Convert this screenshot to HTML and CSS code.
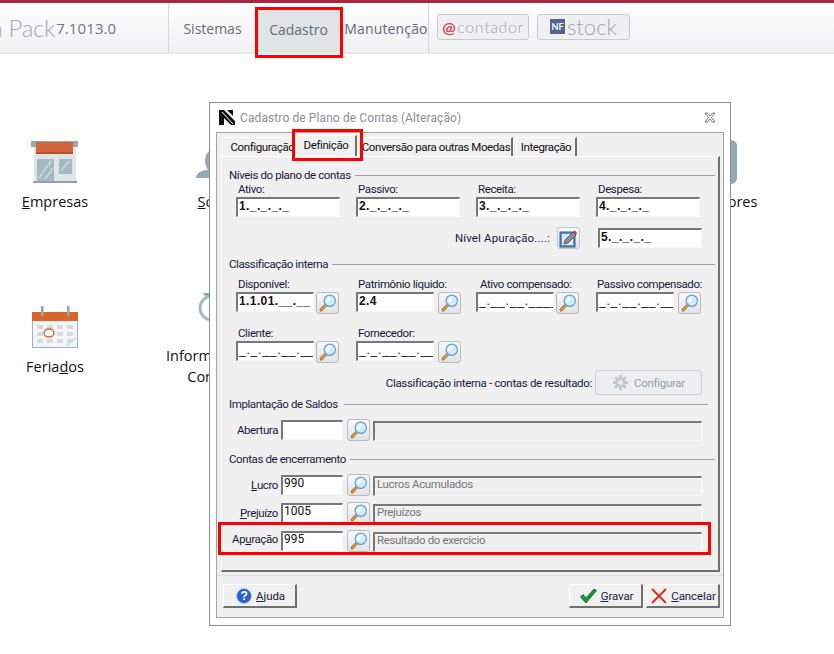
FILE: index.html
```html
<!DOCTYPE html>
<html lang="pt-BR">
<head>
<meta charset="utf-8">
<title>Cadastro de Plano de Contas</title>
<link rel="stylesheet" href="styles.css">
</head>
<body>
<svg class="defs" aria-hidden="true">
  <symbol id="lupa" viewBox="0 0 23 22">
    <path d="M4.5 18.5 L9.5 13.5" stroke="#8c5a20" stroke-width="3.2" stroke-linecap="round"/>
    <path d="M4.5 18.5 L9.5 13.5" stroke="#ee9a3a" stroke-width="2" stroke-linecap="round"/>
    <circle cx="14" cy="8.5" r="6.2" fill="#cfeafa" stroke="#6a9fcc" stroke-width="1.4"/>
    <path d="M10.2 9.5 A4.2 4.2 0 0 1 15.5 4.6 L 12 10.5 Z" fill="#fff"/>
  </symbol>
</svg>
<div class="screen">
  <header class="toolbar">
    <div class="brand"><span class="brand-name">a Pack</span><span class="brand-ver">7.1013.0</span></div>
    <nav class="nav">
      <span class="nav-item nav-sistemas">Sistemas</span>
      <span class="nav-item nav-active">Cadastro</span>
      <span class="nav-item nav-manut">Manutenção</span>
    </nav>
    <div class="tools">
      <span class="tool tool-contador"><span class="at">@</span>contador</span>
      <span class="tool tool-stock"><span class="nf">NF</span>stock</span>
    </div>
  </header>

  <main class="tiles">
    <div class="tile">
      <div class="tile-icon">
        <svg width="48" height="42" viewBox="0 0 48 42">
          <rect x="3" y="4" width="42" height="37" fill="#dfe5e7"/>
          <rect x="0" y="0" width="47" height="6" fill="#97aab3"/>
          <rect x="5" y="1" width="37" height="12" fill="#d2653a"/>
          <rect x="5" y="11" width="37" height="2" fill="#b3532e"/>
          <rect x="6" y="18" width="17" height="23" fill="#a5b9c1"/>
          <path d="M8 37 L20 20 M14 38 L22 27" stroke="#c6d4da" stroke-width="2"/>
          <rect x="28" y="18" width="13" height="15" fill="#a5b9c1"/>
          <path d="M30 30 L38 20" stroke="#c6d4da" stroke-width="2"/>
          <rect x="2" y="40" width="44" height="2" fill="#8fa2ab"/>
        </svg>
      </div>
      <div class="tile-label"><span><u>E</u>mpresas</span></div>
    </div>
    <div class="tile">
      <div class="tile-icon">
        <svg width="48" height="44" viewBox="0 0 48 44" fill="#95a7af">
          <circle cx="24" cy="21" r="14"/>
          <path d="M1 38 C1 32 8 29 24 29 C40 29 47 32 47 38 Z"/>
        </svg>
      </div>
      <div class="tile-label"><span><u>S</u>ócios</span></div>
    </div>
    <div class="tile"></div>
    <div class="tile"></div>
    <div class="tile">
      <div class="tile-icon">
        <svg width="52" height="44" viewBox="0 0 52 44"><rect x="0" y="0" width="52" height="44" rx="6" fill="#95a7af"/></svg>
      </div>
      <div class="tile-label"><span>Fornecedores</span></div>
    </div>
    <div class="tile">
      <div class="tile-icon">
        <svg width="48" height="44" viewBox="0 0 48 44">
          <rect x="1.5" y="7.5" width="45" height="35" fill="#f3f6f7" stroke="#9fb0b8"/>
          <rect x="1" y="7" width="46" height="9" fill="#d8672f"/>
          <rect x="10" y="1" width="2.5" height="10" fill="#94a7b0"/>
          <rect x="36" y="1" width="2.5" height="10" fill="#94a7b0"/>
          <g fill="#d5dde1">
            <rect x="6" y="20" width="6" height="4"/><rect x="16" y="20" width="6" height="4"/><rect x="26" y="20" width="6" height="4"/><rect x="36" y="20" width="6" height="4"/>
            <rect x="6" y="27" width="6" height="4"/><rect x="26" y="27" width="6" height="4"/><rect x="36" y="27" width="6" height="4"/>
            <rect x="6" y="34" width="6" height="4"/><rect x="16" y="34" width="6" height="4"/><rect x="26" y="34" width="6" height="4"/>
          </g>
          <ellipse cx="18" cy="28" rx="5" ry="4" fill="none" stroke="#d8672f" stroke-width="1.4"/>
          <path d="M36 42 L36 34 L46 33 Z" fill="#d5dde1"/>
        </svg>
      </div>
      <div class="tile-label"><span>Feria<u>d</u>os</span></div>
    </div>
    <div class="tile">
      <div class="tile-icon">
        <svg class="icon-over" width="48" height="44" viewBox="0 0 48 44">
          <path d="M8 -12 C10 -8 14 -6 22 -5 V-12 Z" fill="#95a7af"/>
          <circle cx="17" cy="3" r="12" fill="none" stroke="#a9b9c0" stroke-width="3"/>
        </svg>
      </div>
      <div class="tile-label"><span>Informações do<br>Contador</span></div>
    </div>
  </main>

  <section class="dialog">
    <div class="titlebar">
      <svg class="title-logo" width="17" height="17" viewBox="0 0 17 17">
        <path d="M0 1 H5 L16 12 V16 H12 L5 9 V16 H0 Z" fill="#111"/>
        <path d="M8 1 H14 V7 Z" fill="#111"/>
        <path d="M3 3 L14 15" stroke="#fff" stroke-width="1"/>
      </svg>
      <span class="title-text">Cadastro de Plano de Contas (Alteração)</span>
      <svg class="title-close" width="12" height="11" viewBox="0 0 12 11">
        <path d="M1 1 L3.5 1 L6 4 L8.5 1 L11 1 L7.5 5.5 L11 10 L8.5 10 L6 7 L3.5 10 L1 10 L4.5 5.5 Z" fill="#fff" stroke="#666" stroke-width="0.9"/>
      </svg>
    </div>
    <div class="panel">
      <div class="tabs">
        <span class="tab tab-conf">Configuração</span>
        <span class="tab tab-def">Definição</span>
        <span class="tab tab-conv">Conversão para outras Moedas</span>
        <span class="tab tab-int">Integração</span>
      </div>
      <div class="page">
        <div class="group-head"><span>Níveis do plano de contas</span></div>
        <div class="cols">
          <div class="field"><label>Ativo:</label><div class="input mask">1._._._._</div></div>
          <div class="field"><label>Passivo:</label><div class="input mask">2._._._._</div></div>
          <div class="field"><label>Receita:</label><div class="input mask">3._._._._</div></div>
          <div class="field"><label>Despesa:</label><div class="input mask">4._._._._</div></div>
        </div>
        <div class="level-row">
          <span>Nível Apuração....:</span>
          <button class="icon-btn edit-btn" type="button">
            <svg width="19" height="19" viewBox="0 0 19 19">
              <rect x="1" y="3" width="15" height="15" fill="#5e8fc0" stroke="#2f5f90"/>
              <rect x="3" y="5" width="11" height="11" fill="#dcebf7"/>
              <path d="M5 15 L6 11 L14 3 L17 6 L9 14 Z" fill="#8a8f96" stroke="#3a3a3a" stroke-width="0.7"/>
              <path d="M14 3 L15.5 1.5 L18 4 L17 6 Z" fill="#d83030"/>
            </svg>
          </button>
          <div class="input mask level-input">5._._._._</div>
        </div>

        <div class="group-head head-class"><span>Classificação interna</span></div>
        <div class="cols cols-class">
          <div class="field"><label>Disponível:</label><div class="lookup"><div class="input short mask">1.1.01.__.__</div><button class="icon-btn" type="button"><svg class="lupa"><use href="#lupa"/></svg></button></div></div>
          <div class="field"><label>Patrimônio líquido:</label><div class="lookup wide"><div class="input short mask">2.4</div><button class="icon-btn" type="button"><svg class="lupa"><use href="#lupa"/></svg></button></div></div>
          <div class="field"><label class="lab-ativo">Ativo compensado:</label><div class="lookup"><div class="input short plain-mask">_.__.__.____</div><button class="icon-btn" type="button"><svg class="lupa"><use href="#lupa"/></svg></button></div></div>
          <div class="field"><label class="lab-passivo">Passivo compensado:</label><div class="lookup wide"><div class="input short plain-mask">_._.__.__.__</div><button class="icon-btn" type="button"><svg class="lupa"><use href="#lupa"/></svg></button></div></div>
        </div>
        <div class="cols cols-second">
          <div class="field"><label>Cliente:</label><div class="lookup"><div class="input short plain-mask">_._.__.__.__</div><button class="icon-btn" type="button"><svg class="lupa"><use href="#lupa"/></svg></button></div></div>
          <div class="field"><label>Fornecedor:</label><div class="lookup wide"><div class="input short plain-mask">_._.__.__.__</div><button class="icon-btn" type="button"><svg class="lupa"><use href="#lupa"/></svg></button></div></div>
        </div>
        <div class="config-row">
          <span>Classificação interna - contas de resultado:</span>
          <button class="config-btn" type="button" disabled>
            <svg width="17" height="17" viewBox="0 0 17 17">
              <g stroke="#c4c8cb" stroke-width="3">
                <path d="M8.5 1 V16 M1 8.5 H16 M3.2 3.2 L13.8 13.8 M13.8 3.2 L3.2 13.8"/>
              </g>
              <circle cx="8.5" cy="8.5" r="5" fill="#c4c8cb"/>
              <circle cx="8.5" cy="8.5" r="2.4" fill="#eceef0"/>
            </svg>
            Configurar
          </button>
        </div>

        <div class="group-head head-saldos"><span>Implantação de Saldos</span></div>
        <div class="line-row">
          <label class="line-label">Abertura</label>
          <div class="input line-input"></div>
          <button class="icon-btn" type="button"><svg class="lupa"><use href="#lupa"/></svg></button>
          <div class="input readonly"></div>
        </div>

        <div class="group-head head-enc"><span>Contas de encerramento</span></div>
        <div class="line-row">
          <label class="line-label"><u>L</u>ucro</label>
          <div class="input line-input">990</div>
          <button class="icon-btn" type="button"><svg class="lupa"><use href="#lupa"/></svg></button>
          <div class="input readonly">Lucros Acumulados</div>
        </div>
        <div class="line-row next">
          <label class="line-label"><u>P</u>rejuízo</label>
          <div class="input line-input">1005</div>
          <button class="icon-btn" type="button"><svg class="lupa"><use href="#lupa"/></svg></button>
          <div class="input readonly">Prejuízos</div>
        </div>
        <div class="line-row next">
          <label class="line-label lab-up">Ap<u>u</u>ração</label>
          <div class="input line-input">995</div>
          <button class="icon-btn" type="button"><svg class="lupa"><use href="#lupa"/></svg></button>
          <div class="input readonly">Resultado do exercício</div>
        </div>
      </div>
      <footer class="footer">
        <button class="win-btn" type="button">
          <svg width="16" height="16" viewBox="0 0 16 16">
            <circle cx="8" cy="8" r="7.5" fill="#2a62c8" stroke="#b8c8e0"/>
            <text x="8" y="12" text-anchor="middle" class="help-q">?</text>
          </svg>
          <span><u>A</u>juda</span>
        </button>
        <div class="footer-right">
          <button class="win-btn" type="button">
            <svg width="17" height="16" viewBox="0 0 17 16">
              <path d="M0.5 9 L3 6.5 L6 10 L14 1 L16.5 2.5 L6 15 Z" fill="#15a01f" stroke="#0a3a60" stroke-width="0.7"/>
            </svg>
            <span><u>G</u>ravar</span>
          </button>
          <button class="win-btn" type="button">
            <svg width="16" height="16" viewBox="0 0 16 16">
              <path d="M1 1 L15 15 M15 1 L1 15" stroke="#e02a10" stroke-width="1.8"/>
            </svg>
            <span><u>C</u>ancelar</span>
          </button>
        </div>
      </footer>
    </div>
  </section>

  <div class="hl hl-nav"></div>
  <div class="hl hl-tab"></div>
  <div class="hl hl-row"></div>
</div>
</body>
</html>
```

FILE: styles.css
```css
* { box-sizing: border-box; }
html, body { margin: 0; padding: 0; background: #fff; }
.defs { width: 0; height: 0; position: absolute; }
.screen { position: relative; width: 834px; height: 654px; overflow: hidden; font-family: "Open Sans", sans-serif; }

/* Top toolbar */
.toolbar { display: flex; height: 54px; border-top: 3px solid #a8263f; border-bottom: 2px solid #e6e8ea; background: linear-gradient(#ffffff, #eef0f1); color: #666d75; }
.brand { flex: none; display: flex; align-items: center; border-right: 1px solid #d4d6d8; margin-left: -9px; width: 178px; }
.brand-name { font-family: Lato, sans-serif; font-weight: 300; font-size: 24px; color: #a4a8ac; letter-spacing: -0.3px; }
.brand-ver { font-size: 15px; color: #70767c; margin-left: 1px; letter-spacing: 0.1px; }
.nav { display: flex; width: 260px; border-right: 1px solid #d4d6d8; font-size: 14px; }
.nav-item { display: flex; align-items: center; justify-content: center; padding-top: 1px; }
.nav-sistemas { width: 87px; }
.nav-active { width: 85px; background: #e1e4e7; margin-top: 6px; padding-bottom: 3px; }
.nav-manut { width: 87px; color: #5f6a78; letter-spacing: 0.15px; padding-left: 3px; }
.tools { display: flex; align-items: center; gap: 8px; margin-left: 8px; padding-bottom: 2px; }
.tool { display: flex; align-items: center; justify-content: center; width: 92px; height: 26px; border: 1px solid #c8cacc; border-radius: 3px; background: #eef0f1; color: #a2a6aa; }
.tool-contador { font-family: Lato, sans-serif; font-weight: 300; font-size: 16px; letter-spacing: 0.6px; }
.at { color: #cf4a55; font-weight: 700; font-size: 16px; margin-right: 1px; }
.tool-stock { width: 93px; font-family: Lato, sans-serif; font-weight: 300; font-size: 22px; }
.nf { background: #56648e; color: #fff; font-size: 9px; font-weight: 700; width: 15px; height: 15px; line-height: 15px; text-align: center; margin-right: 2px; letter-spacing: 0; }

/* Desktop tiles */
.tiles { display: grid; grid-template-columns: repeat(5, 164px); grid-auto-rows: 165px; margin-left: -27px; margin-top: 86px; }
.tile { display: flex; flex-direction: column; align-items: center; font-size: 14.5px; color: #111; }
.tile-icon { height: 44px; display: flex; align-items: center; justify-content: center; }
.icon-over { overflow: visible; }
.tile-label { height: 34px; display: flex; align-items: center; text-align: center; line-height: 21px; white-space: nowrap; }

/* Dialog window */
.dialog { position: absolute; left: 209px; top: 102px; width: 522px; height: 524px; background: #fff; border: 1px solid #8a8f94; font-family: Roboto, sans-serif; font-size: 11.5px; letter-spacing: -0.4px; color: #1a1a3a; padding: 0 6px 7px; display: flex; flex-direction: column; }
.titlebar { height: 29px; flex: none; display: flex; align-items: center; }
.title-logo { margin-left: 3px; }
.title-text { margin-left: 4px; color: #8b9096; flex: 1; font-size: 12px; letter-spacing: 0.1px; }
.title-close { margin-right: 8px; }
.panel { flex: 1; background: #f0f0f0; border: 1px solid #a2a4a6; display: flex; flex-direction: column; }

.tabs { display: flex; height: 23px; padding-left: 5px; align-items: flex-end; color: #111; flex: none; white-space: nowrap; }
.tab { height: 19px; display: flex; align-items: center; justify-content: center; border-top: 1px solid #fff; border-left: 1px solid #fff; border-right: 2px solid #707070; }
.tab-conf { width: 74px; border-right: 0; padding-left: 6px; }
.tab-def { width: 61px; height: 21px; padding-bottom: 3px; }
.tab-conv { width: 153px; margin-left: 3px; }
.tab-int { width: 61px; margin-left: 3px; }

.page { height: 416px; margin-left: 4px; margin-right: 3px; border-top: 1px solid #fff; border-left: 1px solid #fff; border-right: 2px solid #707070; border-bottom: 2px solid #707070; padding: 11px 3px 0 7px; flex: none; }

.group-head { display: flex; align-items: center; gap: 4px; height: 14px; color: #1a1a3a; }
.group-head::after { content: ""; flex: 1; height: 1px; background: #a0a0a0; margin-top: 1px; }
.head-class { margin-top: 8px; }
.head-saldos { margin-top: 2px; margin-right: 7px; }
.head-saldos::after { margin-left: 2px; }
.head-enc { margin-top: 11px; }

.cols { display: grid; grid-template-columns: 120px 120px 120px 105px; margin-left: 7px; }
.cols-class { margin-top: 6px; }
.cols-second { margin-top: 12px; }
.field label { display: block; height: 15px; line-height: 15px; padding-left: 2px; white-space: nowrap; }
.field .lab-ativo { padding-left: 4px; }
.field .lab-passivo { padding-left: 1px; }

.input { height: 20px; background: #fff; border-top: 2px solid #787878; border-left: 2px solid #787878; border-right: 1px solid #f8f8f8; border-bottom: 1px solid #f8f8f8; line-height: 14px; padding-left: 1px; color: #111; white-space: nowrap; overflow: hidden; font-size: 12px; letter-spacing: 0; }
.mask { font-family: "Liberation Sans", sans-serif; font-weight: 700; letter-spacing: 0.4px; line-height: 15px; }
.plain-mask { font-family: "Liberation Sans", sans-serif; letter-spacing: 0.8px; }
.cols > .field > .input { width: 104px; }
.lookup { display: flex; gap: 2px; align-items: flex-start; }
.lookup.wide { gap: 4px; }
.short { width: 78px; }

.icon-btn { width: 23px; height: 22px; padding: 0; background: linear-gradient(#f7f8f9, #e0e4e7); border: 1px solid #b8bcc0; border-radius: 3px; display: flex; align-items: center; justify-content: center; flex: none; }
.lupa { width: 23px; height: 22px; display: block; }
.edit-btn { border-color: #c4c8cc; }

.level-row { display: flex; align-items: center; margin-top: 10px; height: 22px; margin-right: 13px; justify-content: flex-end; }
.level-row span { margin-right: 7px; letter-spacing: 0.15px; }
.level-input { width: 104px; margin-left: 18px; }

.config-row { display: flex; align-items: center; justify-content: flex-end; margin-top: 7px; height: 25px; margin-right: 13px; }
.config-row span { margin-right: 3px; letter-spacing: -0.32px; }
.config-btn { width: 107px; height: 25px; background: #eceef0; border: 1px solid #ccd0d3; border-radius: 3px; color: #9a9ea2; font: inherit; letter-spacing: -0.3px; display: flex; align-items: center; justify-content: center; gap: 5px; padding: 0; }

.line-row { display: flex; align-items: center; height: 22px; margin-top: 8px; margin-left: 7px; margin-right: 13px; }
.line-row.next { margin-top: 6px; }
.line-label { width: 42px; display: flex; justify-content: flex-end; margin-right: 3px; white-space: nowrap; flex: none; }
.lab-up { margin-bottom: 4px; }
.line-input { width: 62px; flex: none; margin-right: 4px; line-height: 13px; }
.readonly { flex: 1; margin-left: 3px; background: #f0f0f0; color: #777; margin-top: 1px; padding-left: 2px; font-size: 11.5px; line-height: 12px; letter-spacing: -0.35px; }

.footer { flex: 1; margin-top: 3px; border-top: 1px solid #dedede; display: flex; justify-content: space-between; align-items: flex-start; padding: 8px 3px 0 6px; }
.footer-right { display: flex; gap: 3px; }
.win-btn { width: 74px; height: 24px; padding: 0 0 0 2px; background: #f0f0f0; border-top: 1px solid #fff; border-left: 1px solid #fff; border-right: 2px solid #707070; border-bottom: 2px solid #707070; font: inherit; letter-spacing: -0.1px; color: #1a1a3a; display: flex; align-items: center; justify-content: center; gap: 4px; }
.help-q { font-family: "Liberation Sans", sans-serif; font-size: 12px; font-weight: 700; fill: #fff; }

/* Red highlight rectangles drawn over the screenshot */
.hl { position: absolute; border: 3px solid #f00; pointer-events: none; }
.hl-nav { left: 255px; top: 7px; width: 88px; height: 51px; }
.hl-tab { left: 292px; top: 129px; width: 71px; height: 32px; }
.hl-row { left: 218px; top: 522px; width: 493px; height: 33px; }
```
